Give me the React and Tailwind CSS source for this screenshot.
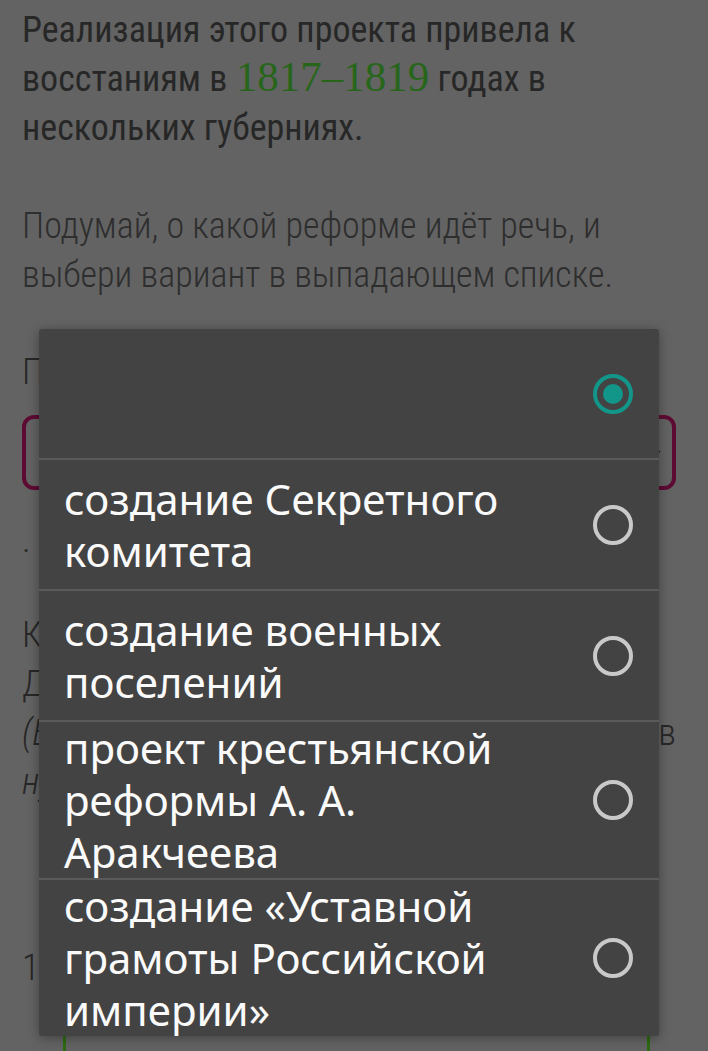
import React from 'react';

const options = [
  { label: '', selected: true },
  { label: 'создание Секретного комитета' },
  { label: 'создание военных поселений' },
  { label: 'проект крестьянской реформы А. А. Аракчеева' },
  { label: 'создание «Уставной грамоты Российской империи»' },
];

function Radio({ selected }) {
  return (
    <svg width="42" height="42" viewBox="0 0 42 42" className="shrink-0">
      {selected ? (
        <>
          <circle cx="21" cy="21" r="18" fill="none" stroke="#12968a" strokeWidth="4" />
          <circle cx="21" cy="21" r="10" fill="#12968a" />
        </>
      ) : (
        <circle cx="21" cy="21" r="18" fill="none" stroke="#c9c9c9" strokeWidth="4" />
      )}
    </svg>
  );
}

function Page() {
  return (
    <div className="pl-[22px] pr-[32px] pt-[6px] text-[36px] leading-[49px] text-[#272727] font-stretch-condensed [font-family:Roboto,'Liberation_Sans',sans-serif]">
      <p>
        Реализация этого проекта привела к восстаниям в{' '}
        <span className="text-[43px] leading-none text-[#27661a] [font-family:'Liberation_Serif',serif]">
          1817–1819
        </span>{' '}
        годах в нескольких губерниях.
      </p>
      <p className="mt-[49px] font-light text-[#2e2e2e]">
        Подумай, о какой реформе идёт речь, и выбери вариант в выпадающем списке.
      </p>
      <p className="mt-[48px] font-light">Правильный ответ:</p>
      <div className="mt-[18px] h-[75px] rounded-[12px] border-[4px] border-[#5e0b33] flex items-center justify-end pr-[10px]">
        <svg width="14" height="10" viewBox="0 0 14 10">
          <path d="M2 3l5 5 5-5" fill="none" stroke="#2a2a2a" strokeWidth="1.5" />
        </svg>
      </div>
      <p className="mt-[26px] font-light">.</p>
      <div className="mt-[46px] font-light">
        <p className="whitespace-nowrap overflow-hidden">Как Александр I относился</p>
        <p className="whitespace-nowrap overflow-hidden">Дополни предложение.</p>
        <p className="flex justify-between italic">
          <span>(Если нужно, то</span>
          <span className="not-italic">в</span>
        </p>
        <p className="whitespace-nowrap overflow-hidden italic">нужном месте.)</p>
      </div>
      <p className="mt-[137px] font-light">1.</p>
      <div className="mt-[19px] ml-[41px] mr-[26px] h-[60px] border-x-[3px] border-t-[3px] border-[#2c6b12]" />
    </div>
  );
}

export default function App() {
  return (
    <div className="relative h-[1051px] w-[708px] overflow-hidden bg-[#636363]">
      <Page />
      <div className="absolute left-[39px] top-[329px] w-[620px] rounded-[3px] bg-[#434343] shadow-[0_2px_12px_rgba(0,0,0,0.35)] [font-family:'Noto_Sans','Open_Sans',sans-serif]">
        {options.map((o, i) => (
          <div
            key={i}
            className={`flex items-center justify-between pl-[25px] pr-[25px] ${
              i > 0 ? 'min-h-[131px] border-t-[2px] border-[#5a5a5a]' : 'min-h-[129px]'
            }`}
          >
            <span className="text-[42px] leading-[52px] text-[#fafafa] max-w-[470px]">{o.label}</span>
            <Radio selected={o.selected} />
          </div>
        ))}
      </div>
    </div>
  );
}
